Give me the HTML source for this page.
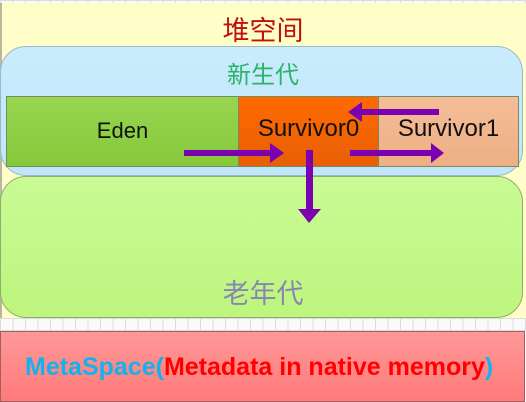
<!DOCTYPE html>
<html><head><meta charset="utf-8"><style>
*{margin:0;padding:0;box-sizing:border-box}
body{width:526px;height:402px;position:relative;overflow:hidden;background:#fff;font-family:"Liberation Sans","Noto Sans CJK SC",sans-serif}
.grid{position:absolute;left:0;width:526px;background-color:#fafafa;background-image:linear-gradient(90deg,#dcdcdc 1px,transparent 1px),linear-gradient(#dcdcdc 1px,transparent 1px);background-size:12.5px 12px}
.heap{position:absolute;left:0;top:3px;width:526px;height:316px;background:#fffec8;border-left:2px solid #b8b8a0}
.young{position:absolute;left:0;top:46px;width:523px;height:130px;border-radius:26px;background:linear-gradient(#c9ecfd,#c0e6fa);border:1px solid #9cb8c8}
.old{position:absolute;left:0;top:176px;width:523px;height:142px;border-radius:26px;background:linear-gradient(#c9fb95,#bdf57e);border:1px solid #8fae6a}
.cell{position:absolute;top:96px;height:71px;border:1px solid #7a8a60;font-size:24px;color:#111;text-align:center;line-height:68px;white-space:nowrap}
.meta{position:absolute;left:0;top:331px;width:525px;height:71px;background:linear-gradient(#ff9898,#ff7a7a);border:1px solid #a06060;font-weight:bold;font-size:25px;line-height:70px;padding-left:24px;white-space:nowrap}
.t{position:absolute;left:0;width:526px;text-align:center}
</style></head><body>
<div class="grid" style="top:0;height:5px"></div>
<div class="heap"></div>
<div class="t" style="top:9px;color:#c01010;font-size:27px">堆空间</div>
<div class="young"></div>
<div class="t" style="top:55px;color:#2bb36a;font-size:24px">新生代</div>
<div class="cell" style="left:6px;width:233px;background:linear-gradient(#97d652,#86c83a);font-size:22px">Eden</div>
<div class="cell" style="left:238px;width:141px;background:linear-gradient(#ff6a00,#e85f05);line-height:64px">Survivor0</div>
<div class="cell" style="left:378px;width:141px;background:linear-gradient(#f4bd98,#eeaf84);line-height:64px">Survivor1</div>
<div class="old"></div>
<div class="t" style="top:272px;color:#8a86b2;font-size:27px">老年代</div>
<div class="grid" style="top:318px;height:13px"></div>
<div class="meta"><span style="color:#12b2ef">MetaSpace(</span><span style="color:#ff0000">Metadata in native memory</span><span style="color:#12b2ef">)</span></div>
<svg width="526" height="402" style="position:absolute;left:0;top:0">
<g fill="#7b00b0">
<rect x="184" y="150" width="88" height="6"/><polygon points="270,143 284,153 270,163"/>
<rect x="360" y="109" width="79" height="6"/><polygon points="362,102 348,112 362,122"/>
<rect x="350" y="150" width="83" height="6"/><polygon points="431,143 444,153 431,163"/>
<rect x="306" y="150" width="7" height="61"/><polygon points="298,209 321,209 309,223"/>
</g></svg>
</body></html>
